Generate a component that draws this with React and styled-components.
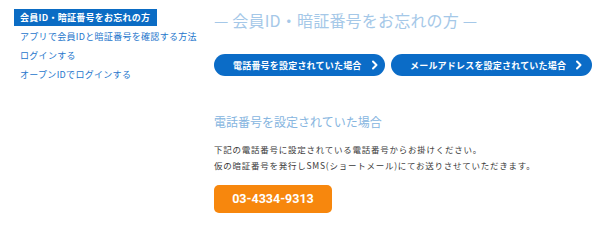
import React from "react";
import styled, { createGlobalStyle } from "styled-components";

const GlobalStyle = createGlobalStyle`
  html, body {
    margin: 0;
    padding: 0;
    background: #ffffff;
  }
  body {
    font-family: "Noto Sans CJK JP", "Noto Sans", sans-serif;
  }
`;

const sideLinks = [
  "アプリで会員IDと暗証番号を確認する方法",
  "ログインする",
  "オープンIDでログインする",
];

const tabs = ["電話番号を設定されていた場合", "メールアドレスを設定されていた場合"];

const Chevron = () => (
  <svg width="8" height="10" viewBox="0 0 8 10">
    <path d="M2 1.5 L5.5 5 L2 8.5" fill="none" stroke="#fff" strokeWidth="2" strokeLinecap="round" strokeLinejoin="round" />
  </svg>
);

const App = () => (
  <>
    <GlobalStyle />
    <Page>
      <Sidebar>
        <ActiveItem>会員ID・暗証番号をお忘れの方</ActiveItem>
        {sideLinks.map((link) => (
          <SideLink key={link}>{link}</SideLink>
        ))}
      </Sidebar>
      <Main>
        <Title>— 会員ID・暗証番号をお忘れの方 —</Title>
        <TabRow>
          {tabs.map((tab, i) => (
            <TabButton key={tab} wide={i === 1}>
              <span>{tab}</span>
              <Chevron />
            </TabButton>
          ))}
        </TabRow>
        <SubTitle>電話番号を設定されていた場合</SubTitle>
        <Body>
          下記の電話番号に設定されている電話番号からお掛けください。
          <br />
          仮の暗証番号を発行しSMS(ショートメール)にてお送りさせていただきます。
        </Body>
        <PhoneButton>03-4334-9313</PhoneButton>
      </Main>
    </Page>
  </>
);

export default App;

const Page = styled.div`
  display: flex;
  width: 602px;
  height: 239px;
  padding: 8px 0 0 14px;
  box-sizing: border-box;
`;

const Sidebar = styled.nav`
  width: 200px;
  display: flex;
  flex-direction: column;
  align-items: flex-start;
`;

const ActiveItem = styled.div`
  width: 143px;
  height: 17px;
  margin-top: 1px;
  box-sizing: border-box;
  padding-left: 6px;
  background: #0b6cc4;
  color: #ffffff;
  font-size: 9px;
  font-weight: 700;
  line-height: 17px;
  letter-spacing: 0.25px;
  white-space: nowrap;
`;

const SideLink = styled.div`
  margin-top: 2px;
  padding-left: 6px;
  height: 17px;
  color: #1d76cc;
  font-size: 9px;
  line-height: 17px;
  letter-spacing: 0.3px;
  white-space: nowrap;
`;

const Main = styled.main`
  display: flex;
  flex-direction: column;
  align-items: flex-start;
`;

const Title = styled.h1`
  margin: 0;
  color: #a5c8e8;
  font-size: 16px;
  font-weight: 400;
  line-height: 24px;
  letter-spacing: 0.2px;
  white-space: nowrap;
`;

const TabRow = styled.div`
  display: flex;
  gap: 6px;
  margin-top: 22px;
`;

const TabButton = styled.button`
  display: flex;
  align-items: center;
  justify-content: space-between;
  width: ${(props) => (props.wide ? "201px" : "171px")};
  height: 22px;
  padding: 0 ${(props) => (props.wide ? "9px" : "6px")} 0 19px;
  box-sizing: border-box;
  border: none;
  border-radius: 11px;
  background: #0b6cc7;
  color: #ffffff;
  font-family: inherit;
  font-size: 9px;
  font-weight: 700;
  letter-spacing: 0.2px;
  white-space: nowrap;
`;

const SubTitle = styled.h2`
  margin: 38px 0 0;
  color: #86b5e0;
  font-size: 12px;
  font-weight: 400;
  line-height: 16px;
  white-space: nowrap;
`;

const Body = styled.p`
  margin: 12px 0 0;
  color: #3a3a3a;
  font-size: 8.5px;
  line-height: 15.5px;
  letter-spacing: 0.75px;
  white-space: nowrap;
`;

const PhoneButton = styled.div`
  margin-top: 12px;
  width: 118px;
  height: 28px;
  border-radius: 5px;
  background: #f7870d;
  color: #ffffff;
  font-family: Roboto, "Liberation Sans", sans-serif;
  font-size: 12.5px;
  font-weight: 700;
  line-height: 28px;
  text-align: center;
`;
